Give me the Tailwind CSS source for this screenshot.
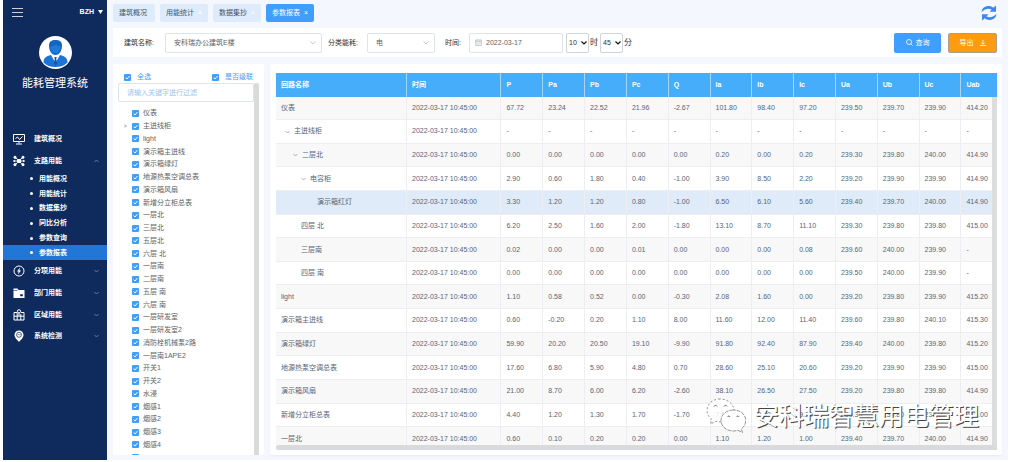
<!DOCTYPE html>
<html lang="zh-CN">
<head>
    <meta charset="UTF-8">
    <meta name="viewport" content="width=device-width, initial-scale=1.0">
    <title>能耗管理系统</title>
    <script src="https://cdn.jsdelivr.net/npm/@tailwindcss/browser@4"></script>
</head>
<body class="flex h-screen overflow-hidden bg-white pr-[3px] pb-[2px] pl-[3px] font-['Liberation_Sans','Noto_Sans_CJK_SC',sans-serif] text-[7px] leading-[10px] text-[#606266]">

    <!-- Sidebar -->
    <aside class="flex w-[104px] shrink-0 flex-col bg-[#0f2a5c] text-white">
        <div class="flex h-6 items-center justify-between pr-1 pl-[9px]">
            <button type="button" aria-label="菜单">
                <svg class="block h-[9px] w-[11px]" viewBox="0 0 11 9" stroke="#c9d1e0" stroke-width="1"><path d="M0 .5h11M0 4.5h11M0 8.5h11"/></svg>
            </button>
            <button type="button" class="flex items-center gap-1 font-bold">BZH
                <svg class="block h-1 w-[5px]" viewBox="0 0 5 4" fill="#fff"><path d="M0 0h5L2.5 4z"/></svg>
            </button>
        </div>
        <div class="mt-3 flex flex-col items-center gap-2">
            <svg class="block size-[33px]" viewBox="0 0 33 33">
                <circle cx="16.5" cy="16.5" r="16.5" fill="#fff"/>
                <path d="M4.500 26.500c0-4.500 2.500-6.500 7.500-7.500l4.500 8 4.500-8c5 1 7.500 3 7.500 7.500-3 3-7 4.500-12 4.500s-9-1.500-12-4.500z" fill="#1b74d8"/>
                <path d="M15.200 21h2.600l-.6 1.800 1 4.400-1.700 2.800-1.700-2.800 1-4.400z" fill="#1257b0"/>
                <path d="M10 9.500C10 5.500 12.500 4 16.500 4S23 5.500 23 9.500c0 5-2.500 9.500-6.500 9.500S10 14.500 10 9.500z" fill="#1765c2"/>
                <path d="M11.500 10.500c2.500 0 4-.6 5.500-1.800 1.300 1.200 2.700 1.700 4.500 1.800-.2 4-2.200 6.800-5 6.800s-4.800-2.800-5-6.800z" fill="#1f7ade"/>
            </svg>
            <h1 class="text-[11px] leading-[12px]">能耗管理系统</h1>
        </div>
        <nav class="mt-[39px] flex h-[219px] flex-col font-bold">
            <a href="#" class="flex flex-1 items-center pr-2 pl-[10px]">
                <svg class="mr-[9px] size-3" viewBox="0 0 12 12" fill="none" stroke="#fff" stroke-width="1"><path d="M.5 1.500h11v7H.5zM6 8.500v2M3 11h6M2.500 5.500L4.500 4l2 2.500L9.500 3.500"/></svg>
                <span>建筑概况</span>
            </a>
            <a href="#" class="flex flex-1 items-center pr-2 pl-[10px]">
                <svg class="mr-[9px] size-3" viewBox="0 0 12 12" fill="#fff" stroke="#fff"><circle cx="2" cy="2.300" r="1.100"/><circle cx="10" cy="2.300" r="1.100"/><circle cx="2" cy="9.700" r="1.100"/><circle cx="10" cy="9.700" r="1.100"/><circle cx="1.200" cy="6" r=".6"/><circle cx="10.800" cy="6" r=".6"/><path d="M4.500 4.500h3v3h-3zM2 2.300l3 2.500M10 2.300L7 4.800M2 9.700l3-2.500M10 9.700L7 7.200M1 6h10" stroke-width=".9"/></svg>
                <span class="flex-1">支路用能</span>
                <svg class="h-1 w-[5px]" viewBox="0 0 5 4" fill="none" stroke="#7f8fae" stroke-width=".8"><path d="M.5 3l2-2 2 2"/></svg>
            </a>
            <div class="flex h-[89px] shrink-0 flex-col">
                <a href="#" class="flex flex-1 items-center gap-[6px] pl-[27px]"><i class="size-[3px] rounded-full bg-white"></i>用能概况</a>
                <a href="#" class="flex flex-1 items-center gap-[6px] pl-[27px]"><i class="size-[3px] rounded-full bg-white"></i>用能统计</a>
                <a href="#" class="flex flex-1 items-center gap-[6px] pl-[27px]"><i class="size-[3px] rounded-full bg-white"></i>数据集抄</a>
                <a href="#" class="flex flex-1 items-center gap-[6px] pl-[27px]"><i class="size-[3px] rounded-full bg-white"></i>同比分析</a>
                <a href="#" class="flex flex-1 items-center gap-[6px] pl-[27px]"><i class="size-[3px] rounded-full bg-white"></i>参数查询</a>
                <a href="#" class="flex flex-1 items-center gap-[6px] bg-[#2277d6] pl-[27px]"><i class="size-[3px] rounded-full bg-white"></i>参数报表</a>
            </div>
            <a href="#" class="flex flex-1 items-center pr-2 pl-[10px]">
                <svg class="mr-[9px] size-3" viewBox="0 0 12 12" fill="none" stroke="#fff"><circle cx="6" cy="6" r="5"/><path d="M7 2.500L4 6.500h1.600L5 9.500l3-4H6.400z" fill="#fff" stroke="none"/></svg>
                <span class="flex-1">分项用能</span>
                <svg class="h-1 w-[5px]" viewBox="0 0 5 4" fill="none" stroke="#7f8fae" stroke-width=".8"><path d="M.5 1l2 2 2-2"/></svg>
            </a>
            <a href="#" class="flex flex-1 items-center pr-2 pl-[10px]">
                <svg class="mr-[9px] size-3" viewBox="0 0 12 12"><path d="M.5 1.500h4l1 1.500h6v8H.5z" fill="#fff"/><path d="M.5 3.500h4M7.500 7.500h2v1.500h-2z" fill="#0f2a5c" stroke="#0f2a5c" stroke-width=".6"/></svg>
                <span class="flex-1">部门用能</span>
                <svg class="h-1 w-[5px]" viewBox="0 0 5 4" fill="none" stroke="#7f8fae" stroke-width=".8"><path d="M.5 1l2 2 2-2"/></svg>
            </a>
            <a href="#" class="flex flex-1 items-center pr-2 pl-[10px]">
                <svg class="mr-[9px] size-3" viewBox="0 0 12 12" fill="none" stroke="#fff"><path d="M4 3.500H1v7.500h10V3.500H8M1 7.200h10M4.200 3.500V11M7.800 5v6"/><circle cx="6" cy="2.300" r="1.600"/><path d="M6 4v3"/></svg>
                <span class="flex-1">区域用能</span>
                <svg class="h-1 w-[5px]" viewBox="0 0 5 4" fill="none" stroke="#7f8fae" stroke-width=".8"><path d="M.5 1l2 2 2-2"/></svg>
            </a>
            <a href="#" class="flex flex-1 items-center pr-2 pl-[10px]">
                <svg class="mr-[9px] size-3" viewBox="0 0 12 12"><path d="M6 .5a4.500 4.500 0 0 1 4.500 4.500C10.500 8 7.500 10 6 12 4.500 10 1.500 8 1.500 5A4.500 4.500 0 0 1 6 .5z" fill="#fff"/><circle cx="6" cy="4.800" r="2.500" fill="none" stroke="#0f2a5c" stroke-width=".7"/><path d="M4.500 5.200l1-1 1 1 1-1" fill="none" stroke="#0f2a5c" stroke-width=".6"/></svg>
                <span class="flex-1">系统检测</span>
                <svg class="h-1 w-[5px]" viewBox="0 0 5 4" fill="none" stroke="#7f8fae" stroke-width=".8"><path d="M.5 1l2 2 2-2"/></svg>
            </a>
        </nav>
    </aside>

    <main class="flex min-w-0 flex-1 flex-col bg-[#f4f7fd] pt-1 pr-[6px] pb-[5px] pl-[6px]">
        <!-- Tabs -->
        <header class="flex items-start justify-between pr-[5px]">
            <div class="flex gap-[5px] text-[#3f5573]">
                <a href="#" class="flex h-[18px] w-[42px] items-center rounded-xs bg-[#deebfa] pl-[6px]">建筑概况</a>
                <a href="#" class="flex h-[18px] w-12 items-center gap-1 rounded-xs bg-[#deebfa] pl-[6px]">用能统计<span class="text-white">×</span></a>
                <a href="#" class="flex h-[18px] w-12 items-center gap-1 rounded-xs bg-[#deebfa] pl-[6px]">数据集抄<span class="text-white">×</span></a>
                <a href="#" class="flex h-[18px] w-12 items-center gap-1 rounded-xs bg-[#409eff] pl-[6px] text-white">参数报表<span>×</span></a>
            </div>
            <button type="button" aria-label="刷新" class="mt-px">
                <svg class="block size-4" viewBox="0 0 16 16" fill="#3f86f5"><path d="M.5 7C.8 3.200 4 1 7.500 1c2 0 3.500.6 4.800 1.700L15 .5v6.300H8.500l2-2C9.700 4.100 8.600 3.700 7.500 3.700 5 3.700 3.300 4.800.5 7zM15.500 9c-.3 3.800-3.500 6-7 6-2 0-3.500-.6-4.800-1.700L1 15.500V9.200h6.500l-2 2c.8.7 1.900 1.100 3 1.100 2.500 0 4.200-1.100 7-3.300z"/></svg>
            </button>
        </header>

        <!-- Filters -->
        <form class="mt-[6px] flex h-[29px] shrink-0 items-center bg-white pr-[5px] pl-[11px] text-[#303133]" onsubmit="return false">
            <label for="building" class="w-[41px]">建筑名称:</label>
            <div class="relative mr-[6px]">
                <select id="building" class="block h-5 w-[157px] appearance-none rounded-xs border border-[#dfe3ea] bg-white pl-2 text-[#606266]"><option>安科瑞办公建筑E楼</option></select>
                <svg class="pointer-events-none absolute top-2 right-[6px] h-1 w-[6px]" viewBox="0 0 6 4" fill="none" stroke="#b4b9c2" stroke-width=".8"><path d="M.5.5L3 3 5.500.5"/></svg>
            </div>
            <label for="energy" class="w-[39px]">分类能耗:</label>
            <div class="relative mr-[10px]">
                <select id="energy" class="block h-5 w-[68px] appearance-none rounded-xs border border-[#dfe3ea] bg-white pl-2 text-[#606266]"><option>电</option></select>
                <svg class="pointer-events-none absolute top-2 right-[6px] h-1 w-[6px]" viewBox="0 0 6 4" fill="none" stroke="#b4b9c2" stroke-width=".8"><path d="M.5.5L3 3 5.500.5"/></svg>
            </div>
            <label for="date" class="w-6">时间:</label>
            <div class="relative mr-[3px]">
                <input id="date" type="text" value="2022-03-17" class="block h-5 w-[94px] rounded-xs border border-[#dfe3ea] bg-white pl-4 text-[#606266]">
                <svg class="pointer-events-none absolute top-[6px] left-[6px] size-[7px]" viewBox="0 0 7 7" fill="#e6e8ec" stroke="#c0c4cc" stroke-width=".7"><path d="M.5 1h6v5.500h-6zM.5 2.600h6M2 0v1.500M5 0v1.500"/></svg>
            </div>
            <div class="relative">
                <select id="hour" class="block h-5 w-[23px] appearance-none rounded-xs border border-[#cfd3da] bg-white pl-[2px]"><option>10</option></select>
                <svg class="pointer-events-none absolute top-2 right-[2px] h-1 w-[6px]" viewBox="0 0 6 4" fill="none" stroke="#111" stroke-width="1.200"><path d="M.5.5L3 3 5.500.5"/></svg>
            </div>
            <label for="hour" class="mr-[2px] ml-px text-[8px]">时</label>
            <div class="relative">
                <select id="minute" class="block h-5 w-[23px] appearance-none rounded-xs border border-[#cfd3da] bg-white pl-[2px]"><option>45</option></select>
                <svg class="pointer-events-none absolute top-2 right-[2px] h-1 w-[6px]" viewBox="0 0 6 4" fill="none" stroke="#111" stroke-width="1.200"><path d="M.5.5L3 3 5.500.5"/></svg>
            </div>
            <label for="minute" class="ml-px text-[8px]">分</label>
            <button type="submit" class="ml-auto flex h-5 w-[47px] items-center justify-center gap-[3px] rounded-xs bg-[#409eff] text-white">
                <svg class="size-[7px]" viewBox="0 0 7 7" fill="none" stroke="#fff" stroke-width=".8"><circle cx="3" cy="3" r="2.500"/><path d="M4.800 4.800l1.800 1.800"/></svg>查询
            </button>
            <button type="button" class="ml-[7px] flex h-5 w-[49px] items-center justify-center gap-[6px] rounded-xs border border-[#a8a08c] bg-[#ff9b0f] text-white">导出
                <svg class="size-[6px]" viewBox="0 0 6 6" fill="none" stroke="#fff" stroke-width=".8"><path d="M3 0v4M1.300 2.500L3 4.200l1.700-1.700M0 5.500h6"/></svg>
            </button>
        </form>

        <div class="mt-[7px] flex min-h-0 flex-1 gap-[6px]">
            <!-- Circuit tree -->
            <section class="flex w-[151px] shrink-0 flex-col overflow-hidden rounded-xs bg-white pt-2 pr-[5px] pl-[5px]">
                <div class="flex items-center justify-between pr-[6px] pl-[6px] text-[#409eff]">
                    <label class="flex items-center gap-[6px]"><span class="grid"><input type="checkbox" checked class="col-start-1 row-start-1 size-[7px] appearance-none rounded-[1px] bg-[#409eff]"><svg class="pointer-events-none col-start-1 row-start-1 size-[7px]" viewBox="0 0 7 7" fill="none" stroke="#fff" stroke-width=".9"><path d="M1.500 3.500l1.500 1.500 2.500-3"/></svg></span>全选</label>
                    <label class="flex items-center gap-[6px]"><span class="grid"><input type="checkbox" checked class="col-start-1 row-start-1 size-[7px] appearance-none rounded-[1px] bg-[#409eff]"><svg class="pointer-events-none col-start-1 row-start-1 size-[7px]" viewBox="0 0 7 7" fill="none" stroke="#fff" stroke-width=".9"><path d="M1.500 3.500l1.500 1.500 2.500-3"/></svg></span>是否级联</label>
                </div>
                <div class="mt-px flex min-h-0 flex-1">
                    <div class="flex min-w-0 flex-1 flex-col">
                        <input type="text" aria-label="过滤" placeholder="请输入关键字进行过滤" class="h-[19px] shrink-0 rounded-xs border border-[#dfe3ea] pl-2 placeholder:text-[#9cc4ee]">
                        <ul id="tree" class="-mb-[9px] flex min-h-0 flex-1 flex-col pt-[5px]"></ul>
                    </div>
                    <div class="w-[5px] rounded-t-xs bg-[#d9dadb]"></div>
                </div>
            </section>

            <!-- Report -->
            <section class="flex min-w-0 flex-1 flex-col rounded-xs bg-white pt-[9px] pr-[5px] pb-[5px] pl-[6px] shadow-xs">
                <div class="relative min-h-0 flex-1 overflow-hidden">
                    <table class="h-[378px] w-full table-fixed border-collapse text-left text-[#56657a]">
                        <thead class="bg-[#46adfa] text-white">
                            <tr id="head" class="h-6"></tr>
                        </thead>
                        <tbody id="rows"></tbody>
                    </table>
                    <div class="absolute top-6 right-0 bottom-0 w-[5px] bg-[#dcdddd]"></div>
                    <div class="absolute right-0 bottom-0 left-0 h-[5px] rounded-l-xs bg-[#d9dadb]"></div>
                </div>
            </section>
        </div>
    </main>

    <!-- Account badge over the table -->
    <div class="pointer-events-none absolute right-8 bottom-7 flex items-center gap-2">
        <svg class="h-[36px] w-[40px]" viewBox="0 0 40 36" fill="#fff" stroke="#666" stroke-width=".7">
            <path d="M14 1C6.500 1 1 6 1 12.500c0 4 2 7 5 9L4.500 26l5.500-2.700c1.500.4 3 .6 5 .6C22 23.500 28 19 28 12.500S21.500 1 14 1z" stroke-dasharray="2 2" fill-opacity=".85"/>
            <path d="M27.500 12C20.500 12 15 16.500 15 22.500S20.500 33 27.500 33c1.500 0 3-.3 4.500-.7l4.500 2.200-1.200-3.700c2.700-2 4.400-4.800 4.400-8.300C39.700 16.500 34.500 12 27.500 12z" stroke-dasharray="4 1" fill-opacity=".9"/>
            <path d="M8 8.500c.5-1.500 2.500-1.500 3 0M18 8.500c.5-1.500 2.500-1.500 3 0M21.500 19c.5-1.300 2-1.300 2.500 0M30.500 19c.5-1.300 2-1.300 2.500 0" fill="none" stroke="#333"/>
        </svg>
        <span class="text-[25px] leading-[30px] text-white [text-shadow:1px_1px_0_#444]">安科瑞智慧用电管理</span>
    </div>

    <script>
        const tree = ['仪表', '主进线柜', 'light', '演示箱主进线', '演示箱绿灯', '地源热泵空调总表', '演示箱风扇', '新增分立柜总表',
            '一层北', '三层北', '五层北', '六层 北', '一层南', '二层南', '五层 南', '六层 南', '一层研发室', '一层研发室2',
            '消防栓机械泵2路', '一层南1APE2', '开关1', '开关2', '水浸', '烟感1', '烟感2', '烟感3', '烟感4', ''];

        document.getElementById('tree').innerHTML = tree.map((name, i) => `
            <li class="flex min-h-0 flex-1 items-center pl-[6px]">
                <span class="w-2 shrink-0">${i === 1 ? '<svg class="size-1" viewBox="0 0 4 4" fill="#c0c4cc"><path d="M.5 0L3.5 2 .5 4z"/></svg>' : ''}</span>
                <label class="flex items-center gap-1 whitespace-nowrap">
                    <span class="grid"><input type="checkbox" checked class="col-start-1 row-start-1 size-[7px] appearance-none rounded-[1px] bg-[#409eff]"><svg class="pointer-events-none col-start-1 row-start-1 size-[7px]" viewBox="0 0 7 7" fill="none" stroke="#fff" stroke-width=".9"><path d="M1.5 3.5l1.5 1.5 2.5-3"/></svg></span>${name}
                </label>
            </li>`).join('');

        const columns = ['回路名称', '时间', 'P', 'Pa', 'Pb', 'Pc', 'Q', 'Ia', 'Ib', 'Ic', 'Ua', 'Ub', 'Uc', 'Uab'];
        const widths = { 0: 'w-[18.1%]', 1: 'w-[13.1%]', 13: '' };

        document.getElementById('head').innerHTML = columns.map((name, i) =>
            `<th class="${widths[i] ?? 'w-[5.8%]'} border-r border-[#a5d5fb] pl-[5px] last:border-r-0">${name}</th>`).join('');

        // name, indent level, expandable, values
        const rows = [
            ['仪表', 0, 0, '67.72 23.24 22.52 21.96 -2.67 101.80 98.40 97.20 239.50 239.70 239.90 414.20'],
            ['主进线柜', 1, 1, '- - - - - - - - - - - -'],
            ['二层北', 2, 1, '0.00 0.00 0.00 0.00 0.00 0.20 0.00 0.20 239.30 239.80 240.00 414.90'],
            ['电容柜', 3, 1, '2.90 0.60 1.80 0.40 -1.00 3.90 8.50 2.20 239.20 239.90 239.90 414.90'],
            ['演示箱红灯', 4, 0, '3.30 1.20 1.20 0.80 -1.00 6.50 6.10 5.60 239.40 239.70 240.00 414.90'],
            ['四层 北', 2, 0, '6.20 2.50 1.60 2.00 -1.80 13.10 8.70 11.10 239.30 239.80 239.80 415.00'],
            ['三层南', 2, 0, '0.02 0.00 0.00 0.01 0.00 0.00 0.00 0.08 239.60 240.00 239.90 -'],
            ['四层 南', 2, 0, '0.00 0.00 0.00 0.00 0.00 0.00 0.00 0.00 239.50 240.00 239.90 -'],
            ['light', 0, 0, '1.10 0.58 0.52 0.00 -0.30 2.08 1.60 0.00 239.20 239.80 239.90 415.20'],
            ['演示箱主进线', 0, 0, '0.60 -0.20 0.20 1.10 8.00 11.60 12.00 11.40 239.60 239.80 240.10 415.30'],
            ['演示箱绿灯', 0, 0, '59.90 20.20 20.50 19.10 -9.90 91.80 92.40 87.90 239.40 240.00 239.80 415.20'],
            ['地源热泵空调总表', 0, 0, '17.60 6.80 5.90 4.80 0.70 28.60 25.10 20.60 239.20 239.90 239.90 415.00'],
            ['演示箱风扇', 0, 0, '21.00 8.70 6.00 6.20 -2.60 38.10 26.50 27.50 239.20 239.80 239.80 414.90'],
            ['新增分立柜总表', 0, 0, '4.40 1.20 1.30 1.70 -1.70 7.50 9.60 9.20 239.30 239.80 239.80 415.00'],
            ['一层北', 0, 0, '0.60 0.10 0.20 0.20 0.00 1.10 1.20 1.00 239.40 239.70 240.00 414.90'],
        ];
        const indents = ['pl-[5px]', 'pl-[9px]', 'pl-[17px]', 'pl-[25px]', 'pl-[41px]'];
        const arrow = '<svg class="mr-1 inline-block h-1 w-[5px] align-middle" viewBox="0 0 5 4" fill="none" stroke="#8a94a3" stroke-width=".7"><path d="M.5 1l2 2 2-2"/></svg>';

        document.getElementById('rows').innerHTML = rows.map(([name, level, open, values], i) => {
            const tone = i === 4 ? 'bg-[#dfebf9]' : i % 2 ? 'bg-white' : 'bg-[#f8f8f8]';
            const indent = level === 2 && !open ? 'pl-[25px]' : indents[level];
            const cells = ['2022-03-17 10:45:00', ...values.split(' ')];
            return `<tr class="${tone} border-b border-[#eceef2]">
                <td class="${indent} border-r border-[#eceef2]">${open ? arrow : ''}${name}</td>
                ${cells.map(v => `<td class="border-r border-[#eceef2] pl-[5px] whitespace-nowrap last:border-r-0">${v}</td>`).join('')}
            </tr>`;
        }).join('');
    </script>
</body>
</html>
